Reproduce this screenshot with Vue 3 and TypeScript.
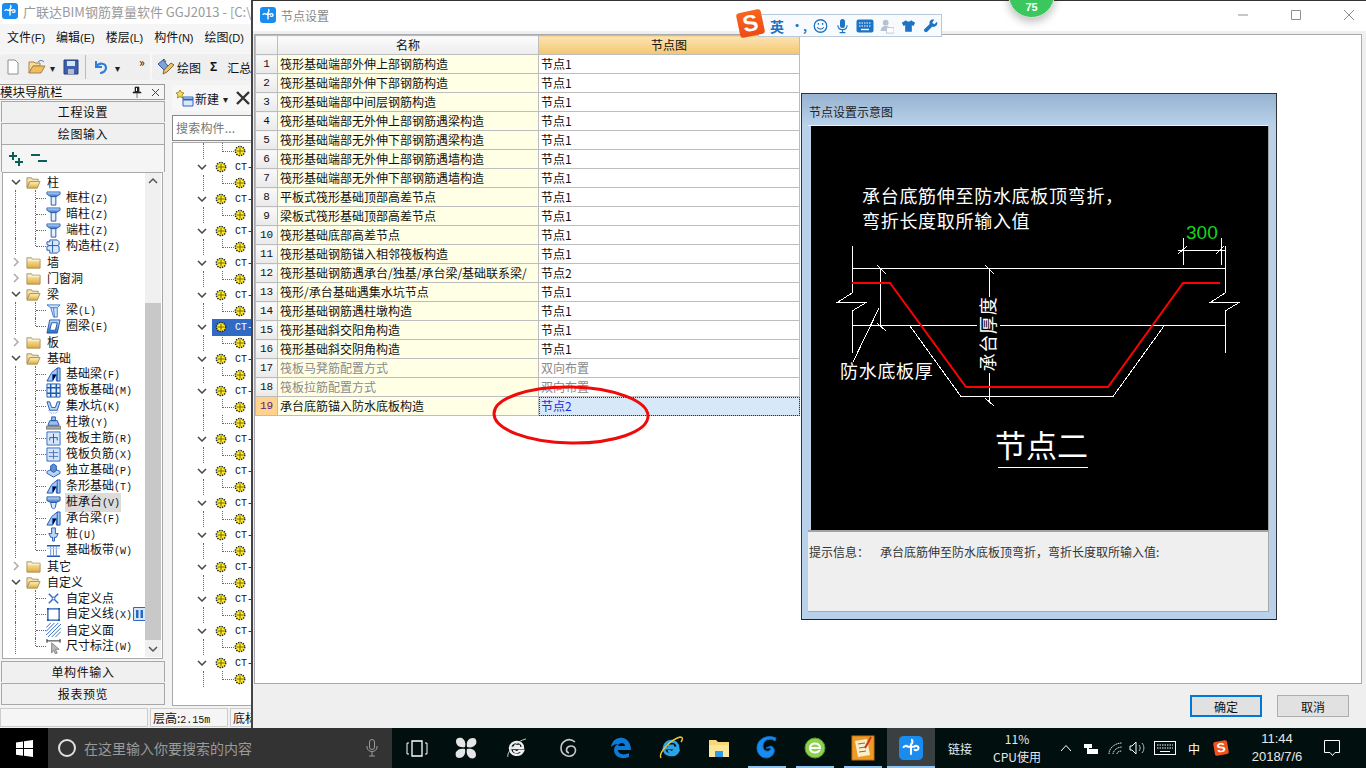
<script setup lang="ts">
interface NavRow {
  label: string
  hot?: string
  icon: string
  child?: boolean
  open?: boolean
  last?: boolean
  active?: boolean
  extra?: boolean
}

const navRows: NavRow[] = [
  { label: '柱', icon: 'open', open: true },
  { label: '框柱', hot: '(Z)', icon: 'col', child: true },
  { label: '暗柱', hot: '(Z)', icon: 'col', child: true },
  { label: '端柱', hot: '(Z)', icon: 'col', child: true },
  { label: '构造柱', hot: '(Z)', icon: 'gzz', child: true, last: true },
  { label: '墙', icon: 'closed' },
  { label: '门窗洞', icon: 'closed' },
  { label: '梁', icon: 'open', open: true },
  { label: '梁', hot: '(L)', icon: 'beam', child: true },
  { label: '圈梁', hot: '(E)', icon: 'ring', child: true, last: true },
  { label: '板', icon: 'closed' },
  { label: '基础', icon: 'open', open: true },
  { label: '基础梁', hot: '(F)', icon: 'jcl', child: true },
  { label: '筏板基础', hot: '(M)', icon: 'raft', child: true },
  { label: '集水坑', hot: '(K)', icon: 'pit', child: true },
  { label: '柱墩', hot: '(Y)', icon: 'pier', child: true },
  { label: '筏板主筋', hot: '(R)', icon: 'main', child: true },
  { label: '筏板负筋', hot: '(X)', icon: 'neg', child: true },
  { label: '独立基础', hot: '(P)', icon: 'iso', child: true },
  { label: '条形基础', hot: '(T)', icon: 'jcl', child: true },
  { label: '桩承台', hot: '(V)', icon: 'cap', child: true, active: true },
  { label: '承台梁', hot: '(F)', icon: 'jcl', child: true },
  { label: '桩', hot: '(U)', icon: 'pile', child: true },
  { label: '基础板带', hot: '(W)', icon: 'band', child: true, last: true },
  { label: '其它', icon: 'closed' },
  { label: '自定义', icon: 'open', open: true },
  { label: '自定义点', icon: 'pt', child: true },
  { label: '自定义线', hot: '(X)', icon: 'line', child: true, extra: true },
  { label: '自定义面', icon: 'area', child: true },
  { label: '尺寸标注', hot: '(W)', icon: 'dim', child: true, last: true },
]

// 中间构件树: 第一行是上一组的子项，后面基本是一父一子
const partRows = Array.from({ length: 34 }, (_, i) => {
  const parent = i <= 15 ? i % 2 === 1 : i >= 18 && i % 2 === 0
  return { parent, selected: i === 11 }
})

interface SettingRow {
  name: string
  value: string
  muted?: boolean
  current?: boolean
}

const settings: SettingRow[] = [
  { name: '筏形基础端部外伸上部钢筋构造', value: '节点1' },
  { name: '筏形基础端部外伸下部钢筋构造', value: '节点1' },
  { name: '筏形基础端部中间层钢筋构造', value: '节点1' },
  { name: '筏形基础端部无外伸上部钢筋遇梁构造', value: '节点1' },
  { name: '筏形基础端部无外伸下部钢筋遇梁构造', value: '节点1' },
  { name: '筏形基础端部无外伸上部钢筋遇墙构造', value: '节点1' },
  { name: '筏形基础端部无外伸下部钢筋遇墙构造', value: '节点1' },
  { name: '平板式筏形基础顶部高差节点', value: '节点1' },
  { name: '梁板式筏形基础顶部高差节点', value: '节点1' },
  { name: '筏形基础底部高差节点', value: '节点1' },
  { name: '筏形基础钢筋锚入相邻筏板构造', value: '节点1' },
  { name: '筏形基础钢筋遇承台/独基/承台梁/基础联系梁/', value: '节点2' },
  { name: '筏形/承台基础遇集水坑节点', value: '节点1' },
  { name: '筏形基础钢筋遇柱墩构造', value: '节点1' },
  { name: '筏形基础斜交阳角构造', value: '节点1' },
  { name: '筏形基础斜交阴角构造', value: '节点1' },
  { name: '筏板马凳筋配置方式', value: '双向布置', muted: true },
  { name: '筏板拉筋配置方式', value: '双向布置', muted: true },
  { name: '承台底筋锚入防水底板构造', value: '节点2', current: true },
]

const taskApps = [
  { icon: 'task', width: 49 },
  { icon: 'fan', width: 50 },
  { icon: 'ie-w', width: 52 },
  { icon: 'spiral', width: 52 },
  { icon: 'edge', width: 51 },
  { icon: 'ie', width: 49 },
  { icon: 'files', width: 48 },
  { icon: 'glodon-g', width: 48, running: true },
  { icon: 'ie-g', width: 48, running: true },
  { icon: 'note', width: 48, running: true },
  { icon: 'logo', width: 48, running: true, focused: true },
]

const menus = ['文件', '编辑', '楼层', '构件', '绘图']
const menuKeys = ['(F)', '(E)', '(L)', '(N)', '(D)']
</script>

<template>
  <div class="screen">
    <svg class="defs" width="0" height="0" aria-hidden="true">
      <defs>
        <linearGradient id="g-folder" x1="0" y1="0" x2="0" y2="1">
          <stop offset="0" stop-color="#fff3c4" />
          <stop offset="1" stop-color="#e0a83a" />
        </linearGradient>
        <linearGradient id="g-blue" x1="0" y1="0" x2="0" y2="1">
          <stop offset="0" stop-color="#cfe2fa" />
          <stop offset="1" stop-color="#2c68c0" />
        </linearGradient>
        <symbol id="i-open" viewBox="0 0 16 16">
          <path d="M1 3h5l1 1.5h6V7H4L1 13z" fill="#f6e3ae" stroke="#a8925c" />
          <path d="M4 7h11l-3 7H1z" fill="url(#g-folder)" stroke="#a8925c" />
        </symbol>
        <symbol id="i-closed" viewBox="0 0 16 16">
          <path d="M1 3h5l1 1.5h8V14H1z" fill="url(#g-folder)" stroke="#a8925c" />
          <path d="M1.500 5.500h13" stroke="#fff8dc" />
        </symbol>
        <symbol id="i-col" viewBox="0 0 16 16">
          <path d="M1 1h14v2.500L11 6H5L1 3.500z" fill="url(#g-blue)" stroke="#2c68c0" />
          <path d="M5.500 6h5v9h-5z" fill="#e4effc" stroke="#1f58b0" />
        </symbol>
        <symbol id="i-gzz" viewBox="0 0 16 16">
          <path d="M4 1h8l2 2v3l-2 1 2 1v5l-2 2H4v-3H1V8l3-1-3-1V3h3z" fill="#dbe8fa" stroke="#1f58b0" />
          <path d="M7 2v12M4 7h8" stroke="#1f58b0" />
        </symbol>
        <symbol id="i-beam" viewBox="0 0 16 16">
          <path d="M1 2h14l-3 3v10H8L5 5z" fill="#d3e5fa" stroke="#3c7bd0" />
          <path d="M8 5l1 10M5 5h7" stroke="#3c7bd0" />
        </symbol>
        <symbol id="i-ring" viewBox="0 0 16 16">
          <path d="M4 1h11l-3 14H1z" fill="url(#g-blue)" stroke="#1f58b0" />
          <path d="M6 4h6l-2 8H4z" fill="#fff" stroke="#1f58b0" />
        </symbol>
        <symbol id="i-jcl" viewBox="0 0 16 16">
          <path d="M1 15l5-9 6-5h3v14h-4V8L7 15z" fill="#a9c8ef" stroke="#1f58b0" />
          <path d="M7 15V8h4M12 1v14" stroke="#1f58b0" />
        </symbol>
        <symbol id="i-raft" viewBox="0 0 16 16">
          <path d="M1 1h14v14H1z" fill="#e4effc" stroke="#1f58b0" />
          <path d="M1 5h14M1 11h14M5 1v14M11 1v14" stroke="#1f58b0" stroke-width="1.600" />
        </symbol>
        <symbol id="i-pit" viewBox="0 0 16 16">
          <path d="M1 3h3l2 6h4l2-6h3l-3 9H4z" fill="#bcd6f5" stroke="#1f58b0" />
          <path d="M3 12l2 3h6l2-3" fill="none" stroke="#6fa0dd" stroke-dasharray="1 1" />
        </symbol>
        <symbol id="i-pier" viewBox="0 0 16 16">
          <path d="M6 2h4v4H6zM4 6h8l2 5H2z" fill="#9cc0ee" stroke="#1f58b0" />
          <path d="M0 12h16v3H0z" fill="#aaa" stroke="#777" />
        </symbol>
        <symbol id="i-main" viewBox="0 0 16 16">
          <path d="M1 1h14v14H1z" fill="#d6e6fa" stroke="#2c68c0" />
          <path d="M8 3v10M4 7h8M4 7v3M12 7v3" stroke="#1f58b0" />
        </symbol>
        <symbol id="i-neg" viewBox="0 0 16 16">
          <path d="M1 1h14v14H1z" fill="#d6e6fa" stroke="#2c68c0" />
          <path d="M3 6h10M3 10h10M8 3v10" stroke="#4a72b8" />
        </symbol>
        <symbol id="i-iso" viewBox="0 0 16 16">
          <path d="M1 9l7-3 7 3-7 4z" fill="#d3e5fa" stroke="#1f58b0" />
          <path d="M1 9v2l7 4 7-4V9" fill="#bcd6f5" stroke="#1f58b0" />
          <path d="M5 3l3-2 3 2v5l-3 2-3-2z" fill="#5f8fd6" stroke="#1f58b0" />
        </symbol>
        <symbol id="i-cap" viewBox="0 0 16 16">
          <path d="M1 2h14v4l-4 2H5L1 6z" fill="url(#g-blue)" stroke="#1f58b0" />
          <path d="M5 8h6l-1 5-2 2-2-2z" fill="#dbe8fa" stroke="#1f58b0" />
        </symbol>
        <symbol id="i-pile" viewBox="0 0 16 16">
          <path d="M6 1h4v6h3l-2 4H9v4H7v-4H5L3 7h3z" fill="#bcd6f5" stroke="#1f58b0" />
        </symbol>
        <symbol id="i-band" viewBox="0 0 16 16">
          <path d="M1 3h14M1 14h14" stroke="#1f58b0" stroke-width="1.600" />
          <path d="M5 3v11M11 3v11M8 3v11" stroke="#5f8fd6" />
          <path d="M1 6h14" stroke="#bcd6f5" />
        </symbol>
        <symbol id="i-pt" viewBox="0 0 16 16">
          <path d="M3 3l10 10M13 3L3 13" stroke="#2c68c0" stroke-width="1.500" />
          <circle cx="8" cy="8" r="1.400" fill="#fff" stroke="#2c68c0" />
        </symbol>
        <symbol id="i-line" viewBox="0 0 16 16">
          <path d="M2 2h12v12H2z" fill="#fff" stroke="#1f58b0" stroke-width="1.400" />
          <path d="M1 1h2v2H1zM13 1h2v2h-2zM1 13h2v2H1zM13 13h2v2h-2z" fill="#1f58b0" />
        </symbol>
        <symbol id="i-area" viewBox="0 0 16 16">
          <path d="M0 5l5-5M0 9l9-9M0 13L13 0M2 15L16 1M6 15l10-10M10 15l6-6" stroke="#2c68c0" />
        </symbol>
        <symbol id="i-dim" viewBox="0 0 16 16">
          <path d="M1 0v4M15 0v4M1 2h14" stroke="#222" />
          <path d="M6 4l8 7-4 0 2 4-2 1-2-4-2 3z" fill="#b9b9b9" stroke="#888" />
        </symbol>
        <symbol id="i-gear" viewBox="0 0 12 12">
          <circle cx="6" cy="6" r="4.600" fill="#ffee22" stroke="#222" stroke-width="1.600" stroke-dasharray="1.400 1" />
          <path d="M6 3v6M3 6h6" stroke="#776600" />
        </symbol>
        <symbol id="i-logo" viewBox="0 0 16 16">
          <rect width="16" height="16" rx="3" fill="#1a8cf0" />
          <path d="M8 2.500c1.300 0 1.300 2 0 3v7M3 8c0-1.600 2-1.800 3-.8h4c1-1 3-.8 3 .8s-2 1.800-3 .8" fill="none" stroke="#fff" stroke-width="1.400" />
        </symbol>
      </defs>
    </svg>

    <div class="desktop">
      <!-- 主程序窗口 -->
      <div class="app-window">
        <div class="app-title">
          <svg class="logo-16"><use href="#i-logo" /></svg>
          <span>广联达BIM钢筋算量软件 GGJ2013 - [C:\U</span>
        </div>
        <div class="menu-bar">
          <span v-for="(m, i) in menus" :key="m" class="menu-item">{{ m }}<i class="menu-key">{{ menuKeys[i] }}</i></span>
        </div>
        <div class="tool-bar">
          <div class="tool-group tool-group--file">
            <svg class="tool-ic" viewBox="0 0 16 16"><path d="M3 1h7l3 3v11H3z" fill="#fff" stroke="#8a8f98" /></svg>
            <svg class="tool-ic tool-ic--open" viewBox="0 0 18 16"><path d="M1 3h5l1 1h5v3H5l-4 7z" fill="#f6dc9a" stroke="#a8824a" /><path d="M5 7h12l-4 7H1z" fill="#eebd5e" stroke="#a8824a" /><path d="M10 3c2-2 4-2 6 0" fill="none" stroke="#3b6fc0" /></svg>
            <span class="drop">▾</span>
            <svg class="tool-ic tool-ic--save" viewBox="0 0 16 16"><path d="M1 1h14v14H1z" fill="#3e5fae" stroke="#25407e" /><path d="M4 2h8v5H4z" fill="#d9e4f7" /><path d="M5 10h6v5H5z" fill="#b8bcc6" /></svg>
            <span class="tool-sep"></span>
            <svg class="tool-ic" viewBox="0 0 16 16"><path d="M3 2v6h6" fill="none" stroke="#2e7fd8" stroke-width="2" /><path d="M3 8c3-5 10-4 10 1 0 3-3 5-6 5" fill="none" stroke="#2e7fd8" stroke-width="2.200" /></svg>
            <span class="drop drop--undo">▾</span>
            <span class="more">»</span>
          </div>
          <div class="tool-group tool-group--draw">
            <svg class="tool-ic tool-ic--draw" viewBox="0 0 18 16"><path d="M1 5l5-4 5 6-4 4z" fill="#7da3d8" stroke="#2f5796" /><path d="M6 1l1-1 2 3" fill="none" stroke="#2f5796" /><path d="M17 6l-7 7-4 2 1-4 7-7z" fill="#e9c46a" stroke="#7c6a3a" /></svg>
            <span class="tool-label">绘图</span>
            <span class="sigma">Σ</span>
            <span class="tool-label">汇总</span>
          </div>
        </div>
        <div class="app-body">
          <aside class="nav">
            <div class="nav-head">
              <span>模块导航栏</span>
              <span class="nav-head-tools">
                <svg width="10" height="12" viewBox="0 0 10 12"><path d="M3 1h4v5h2v1H1V6h2zM5 7v5" fill="#222" stroke="#222" stroke-width=".6" /><path d="M4.500 2v3" stroke="#fff" /></svg>
                <svg width="9" height="9" viewBox="0 0 9 9"><path d="M1 1l7 7M8 1L1 8" stroke="#444" /></svg>
              </span>
            </div>
            <div class="nav-btn">工程设置</div>
            <div class="nav-btn">绘图输入</div>
            <div class="nav-tools">
              <svg width="20" height="16" viewBox="0 0 20 16"><path d="M1 5h8M5 1v8M7 11h8M11 7v8" stroke="#0b5f5a" stroke-width="2" /></svg>
              <svg width="20" height="16" viewBox="0 0 20 16"><path d="M0 4h9M7 10h9" stroke="#0b5f5a" stroke-width="2" /></svg>
            </div>
            <div class="nav-tree">
              <div class="nav-rows">
                <div
                  v-for="row in navRows"
                  :key="row.label + row.icon"
                  class="nav-row"
                  :class="{ 'nav-row--child': row.child, 'nav-row--last': row.last }"
                >
                  <template v-if="!row.child">
                    <svg class="chev" :class="{ 'chev--closed': !row.open }" viewBox="0 0 10 10">
                      <path v-if="row.open" d="M1 3l4 4 4-4" />
                      <path v-else d="M3 1l4 4-4 4" />
                    </svg>
                    <svg class="nav-ic nav-ic--folder"><use :href="'#i-' + row.icon" /></svg>
                  </template>
                  <template v-else>
                    <i class="nav-tick"></i>
                    <svg class="nav-ic"><use :href="'#i-' + row.icon" /></svg>
                  </template>
                  <span class="nav-label" :class="{ 'nav-label--active': row.active }">{{ row.label }}<i v-if="row.hot" class="hot">{{ row.hot }}</i></span>
                  <svg v-if="row.extra" class="nav-extra" viewBox="0 0 13 14"><path d="M.5.5h12v13H.5z" fill="#d7e7fa" stroke="#2c68c0" /><path d="M3 3h2.500v8H3zM7.500 3H10v8H7.500z" fill="#2c68c0" /></svg>
                </div>
              </div>
              <div class="scroll">
                <svg class="scroll-arrow" viewBox="0 0 16 17"><path d="M4 10l4-4 4 4" /></svg>
                <div class="scroll-track"><div class="scroll-thumb"></div></div>
                <svg class="scroll-arrow" viewBox="0 0 16 17"><path d="M4 7l4 4 4-4" /></svg>
              </div>
            </div>
            <div class="nav-btn nav-btn--low">单构件输入</div>
            <div class="nav-btn nav-btn--end">报表预览</div>
          </aside>
          <section class="parts">
            <div class="parts-tools">
              <svg width="20" height="18" viewBox="0 0 20 18"><path d="M5 1l1.500 2.500L9 4 7 6l.5 3L5 7.500 2.500 9 3 6 1 4l2.500-.5z" fill="#f2dc6a" stroke="#a78f24" /><path d="M8 8h10v9H8z" fill="#dbe8fa" stroke="#2c68c0" /><path d="M8 10.500h10" stroke="#2c68c0" stroke-width="2" /></svg>
              <span class="parts-new">新建</span>
              <span class="drop">▾</span>
              <svg class="parts-del" width="16" height="16" viewBox="0 0 16 16"><path d="M2 2l12 12M14 2L2 14" stroke="#333" stroke-width="2.400" /></svg>
            </div>
            <div class="parts-search">搜索构件...</div>
            <div class="parts-tree">
              <div
                v-for="(row, i) in partRows"
                :key="i"
                class="part-row"
                :class="{ 'part-row--parent': row.parent, 'part-row--sel': row.selected }"
              >
                <template v-if="row.parent">
                  <svg class="chev chev--part" viewBox="0 0 10 10"><path d="M1 3l4 4 4-4" /></svg>
                  <span class="part-head">
                    <svg class="part-ic"><use href="#i-gear" /></svg>
                    <span class="part-code">CT-1</span>
                  </span>
                </template>
                <svg v-else class="part-ic part-ic--child"><use href="#i-gear" /></svg>
              </div>
            </div>
          </section>
        </div>
        <div class="status">
          <span class="status-cell status-cell--wide"></span>
          <span class="status-cell status-cell--mid">层高:<i class="hot">2.15m</i></span>
          <span class="status-cell">底标</span>
        </div>
      </div>

      <!-- 节点设置对话框 -->
      <div class="dialog">
        <header class="dialog-title">
          <svg class="logo-16"><use href="#i-logo" /></svg>
          <span class="dialog-name">节点设置</span>
          <span class="win-controls">
            <svg viewBox="0 0 12 12"><path d="M1 6h10" /></svg>
            <svg viewBox="0 0 12 12"><path d="M1.500 1.500h9v9h-9z" /></svg>
            <svg viewBox="0 0 12 12"><path d="M1 1l10 10M11 1L1 11" /></svg>
          </span>
        </header>
        <div class="dialog-body">
          <div class="dialog-panel">
            <table class="grid">
              <colgroup>
                <col class="col-no" />
                <col class="col-text" />
                <col class="col-text" />
              </colgroup>
              <thead>
                <tr>
                  <th class="corner"></th>
                  <th>名称</th>
                  <th class="th-active">节点图</th>
                </tr>
              </thead>
              <tbody>
                <tr v-for="(row, i) in settings" :key="i" :class="{ muted: row.muted, current: row.current }">
                  <td class="no">{{ i + 1 }}</td>
                  <td class="name"><div class="clip">{{ row.name }}</div></td>
                  <td class="value"><div class="clip">{{ row.value }}</div></td>
                </tr>
              </tbody>
            </table>
          </div>
          <footer class="dialog-foot">
            <button type="button" class="btn btn--default">确定</button>
            <button type="button" class="btn">取消</button>
          </footer>
        </div>
      </div>

      <!-- 节点示意图窗口 -->
      <div class="preview">
        <div class="preview-title">节点设置示意图</div>
        <div class="preview-inner">
          <div class="preview-canvas">
            <svg class="drawing" viewBox="811 126 457 404" width="457" height="404">
              <g class="cad-lines" shape-rendering="crispEdges">
                <path d="M852 268.500H1225M852 325.500H977M1000 325.500H1225" />
                <path d="M852 246V293L838 302H867L852 311V353" />
                <path d="M1225 246V293L1211 302H1240L1225 311V353" />
                <path d="M910 326L961 396.500H1113L1164 326" />
                <path d="M880.500 268V325M877 265L886 274M877 323L886 331M879 308L853 362" />
                <path d="M989.500 268V297M989.500 373V402M985 265L994 274M985 398L994 406" />
                <path d="M1183.500 238V265M1221.500 238V265M1178 250.500H1225M1178 254L1187 246M1216 254L1224 246" />
                <path d="M998 467H1088" stroke-width="2" />
              </g>
              <path class="cad-red" d="M852 283H890L966 387H1108L1183 283H1220" />
              <text class="cad-text" x="862" y="203">承台底筋伸至防水底板顶弯折，</text>
              <text class="cad-text" x="862" y="228">弯折长度取所输入值</text>
              <text class="cad-text" x="840" y="378">防水底板厚</text>
              <text class="cad-text cad-text--mid" x="989" y="340" transform="rotate(-90 989 334)">承台厚度</text>
              <text class="cad-dim" x="1186" y="239">300</text>
              <text class="cad-big" x="995" y="457">节点二</text>
            </svg>
          </div>
          <div class="preview-info">
            <span class="info-label">提示信息：</span>
            <span>承台底筋伸至防水底板顶弯折，弯折长度取所输入值:</span>
          </div>
        </div>
      </div>

      <!-- 红圈标注 -->
      <svg class="mark" viewBox="0 0 170 70" width="170" height="70">
        <ellipse cx="85" cy="35" rx="77" ry="28" transform="rotate(1 85 35)" />
      </svg>

      <!-- 搜狗输入法状态条 -->
      <div class="ime">
        <span class="ime-s">S</span>
        <span class="ime-lang">英</span>
        <span class="ime-punc">•,</span>
        <svg class="ime-ic" viewBox="0 0 18 18"><circle cx="9" cy="9" r="7.500" fill="none" stroke="#1f73c4" stroke-width="1.600" /><path d="M5 10.500c2 3 6 3 8 0" fill="none" stroke="#1f73c4" stroke-width="1.500" /><path d="M6.500 5.500v2M11.500 5.500v2" stroke="#1f73c4" stroke-width="1.600" /></svg>
        <svg class="ime-ic" viewBox="0 0 18 18"><rect x="6" y="0.500" width="6" height="11" rx="3" fill="#1f73c4" /><path d="M3.500 8c0 7 11 7 11 0M9 13.500V17M5.500 17h7" fill="none" stroke="#1f73c4" stroke-width="1.400" /></svg>
        <svg class="ime-ic ime-ic--wide" viewBox="0 0 18 14"><rect x="0.500" y="0.500" width="17" height="13" rx="2" fill="#1f73c4" /><path d="M3 4h12M3 7h12" stroke="#fff" stroke-dasharray="1.500 1" /><path d="M5 10.500h8" stroke="#fff" stroke-width="1.400" /></svg>
        <svg class="ime-ic" viewBox="0 0 18 18"><circle cx="8" cy="5" r="3.500" fill="#b6c2ce" /><path d="M2 15c0-8 12-8 12 0z" fill="#b6c2ce" /><rect x="9" y="11" width="9" height="6.500" fill="#fff" stroke="#b6c2ce" /></svg>
        <svg class="ime-ic" viewBox="0 0 18 18"><path d="M6 2L1 5l2 4 2-1v8h8V8l2 1 2-4-5-3c-1 2-5 2-6 0z" fill="#1f73c4" /></svg>
        <svg class="ime-ic" viewBox="0 0 18 18"><path d="M17 4l-3.500 3L11 5l2.500-3.500C10 0 7 3 8 6.500L1.500 13c-1.500 2 1.500 4.500 3.500 3L11 10c3.500 1 7-2 6-6z" fill="#1f73c4" /></svg>
      </div>

      <!-- 绿色悬浮球 -->
      <div class="ball"><span>75</span></div>
    </div>

    <!-- 任务栏 -->
    <div class="taskbar">
      <div class="start">
        <svg width="17" height="17" viewBox="0 0 17 17"><path d="M0 2.400l7-1v6.700H0zM8 1.300l9-1.300v8.100H8zM0 9h7v6.700l-7-1zM8 9h9v8l-9-1.300z" fill="#fff" /></svg>
      </div>
      <div class="search">
        <span class="cortana"></span>
        <span class="search-text">在这里输入你要搜索的内容</span>
        <svg class="search-mic" width="12" height="18" viewBox="0 0 12 18"><rect x="3.500" y="0.500" width="5" height="10" rx="2.500" fill="none" stroke="#9a9a9a" /><path d="M1 7v1c0 6 10 6 10 0V7M6 13v4M3 17h6" fill="none" stroke="#9a9a9a" /></svg>
      </div>
      <div
        v-for="app in taskApps"
        :key="app.icon"
        class="task-app"
        :class="{ 'task-app--run': app.running, 'task-app--focus': app.focused }"
        :style="{ width: app.width + 'px' }"
      >
        <svg v-if="app.icon === 'task'" width="22" height="17" viewBox="0 0 22 17"><path d="M6 1h10v15H6z" fill="none" stroke="#fff" stroke-width="1.300" /><path d="M3 3H1v11h2M19 3h2v11h-2" fill="none" stroke="#fff" /></svg>
        <svg v-else-if="app.icon === 'fan'" width="22" height="22" viewBox="0 0 22 22"><path d="M10 10C4 11 1 8 1 4c0-3 3-4 6-3 3 2 4 5 3 9zM12 10c-1-6 2-9 6-9 3 0 4 3 3 6-2 3-5 4-9 3zM12 12c6-1 9 2 9 6 0 3-3 4-6 3-3-2-4-5-3-9zM10 12c1 6-2 9-6 9-3 0-4-3-3-6 2-3 5-4 9-3z" fill="#e6e6e6" /></svg>
        <svg v-else-if="app.icon === 'ie-w'" width="24" height="24" viewBox="0 0 24 24"><path d="M5 12h13c0-8-12-8-13 0 0 8 10 9 13 3h-4c-2 2-5 1-5-1M9 10h6" fill="none" stroke="#eee" stroke-width="2.400" /><path d="M3 21c-2-4 8-16 18-18" fill="none" stroke="#ccc" /></svg>
        <svg v-else-if="app.icon === 'spiral'" width="20" height="20" viewBox="0 0 20 20"><path d="M16 4C10-1 2 3 2 10s8 10 12 7 3-9-2-9-6 6-2 7" fill="none" stroke="#c8c8c8" stroke-width="1.600" /></svg>
        <svg v-else-if="app.icon === 'edge'" width="22" height="22" viewBox="0 0 22 22"><path d="M1 10C2 3 8 0 13 1c5 1 8 6 8 12H8c0 4 6 6 11 3v4c-7 3-15 0-15-7 0-3 2-5 4-6-3 0-5 1-7 3zM8 9h7c0-4-6-4-7 0z" fill="#0f79d8" /></svg>
        <svg v-else-if="app.icon === 'ie'" width="26" height="26" viewBox="0 0 26 26"><path d="M6 13h14c0-9-13-9-14 0 0 8 11 9 14 3h-4c-2 2-5 1-5-1M10 11h6" fill="none" stroke="#29a3ea" stroke-width="2.800" /><path d="M3 23C0 18 12 5 22 2c3 0 3 2 1 5" fill="none" stroke="#f2c62f" stroke-width="1.400" /></svg>
        <svg v-else-if="app.icon === 'files'" width="22" height="20" viewBox="0 0 22 20"><path d="M1 2h7l2 2h11v15H1z" fill="#f6d675" /><path d="M1 7h20v12H1z" fill="#fbe69b" /><path d="M7 13h8v6H7z" fill="#2f9be3" /></svg>
        <svg v-else-if="app.icon === 'glodon-g'" width="24" height="26" viewBox="0 0 24 26"><path d="M21 3C12-1 2 4 2 13c0 8 8 12 13 9 5-2 6-9 1-11l-5 2h5c-1 5-8 4-8-2 0-6 7-9 12-5z" fill="#1a8cf0" stroke="#0b6fc8" /></svg>
        <svg v-else-if="app.icon === 'ie-g'" width="24" height="26" viewBox="0 0 24 26"><circle cx="12" cy="13" r="10" fill="#8fd14f" stroke="#4d9b2a" /><path d="M7 13h10c0-6-10-6-10 0 0 5 7 6 10 2" fill="none" stroke="#fff" stroke-width="2" /></svg>
        <svg v-else-if="app.icon === 'note'" width="24" height="26" viewBox="0 0 24 26"><rect x="1" y="1" width="22" height="24" fill="#ef9a24" stroke="#c87410" /><path d="M4 6l12-2 3 16-12 2z" fill="#fbeecb" /><path d="M7 9l7-1M8 13l7-1M8 17l7-1" stroke="#8b6a33" /><path d="M20 2L14 13" stroke="#c0392b" stroke-width="2" /></svg>
        <svg v-else width="24" height="24"><use href="#i-logo" /></svg>
      </div>
      <div class="tray">
        <span class="tray-link">链接</span>
        <span class="tray-cpu"><b>11%</b><b>CPU使用</b></span>
        <svg class="tray-caret" width="12" height="8" viewBox="0 0 12 8"><path d="M1 7l5-5.500L11 7" fill="none" stroke="#fff" /></svg>
        <svg class="tray-cell tray-cell--bat" width="16" height="14" viewBox="0 0 16 14"><path d="M3 0v3M7 0v3M1 3h8v4H6v2H4V7H1z" fill="#fff" /><path d="M4 8h11v5H4z" fill="#fff" /></svg>
        <svg class="tray-cell tray-cell--net" width="16" height="14" viewBox="0 0 16 14"><path d="M2 13C2 7 8 2 15 2M6 13c0-3 4-7 9-7M10 13c0-2 2-3 5-3" fill="none" stroke="#ddd" stroke-dasharray="1.500 .6" /></svg>
        <svg class="tray-cell tray-cell--vol" width="16" height="14" viewBox="0 0 16 14"><path d="M1 5h2l4-4v12L3 9H1z" fill="none" stroke="#fff" /><path d="M10 4c1.500 2 1.500 4 0 6M13 2c2.500 3 2.500 7 0 10" fill="none" stroke="#bbb" /></svg>
        <svg class="tray-cell tray-cell--key" width="22" height="14" viewBox="0 0 22 14"><rect x="0.500" y="0.500" width="21" height="13" fill="none" stroke="#fff" /><path d="M3 4h16M3 7h16" stroke="#fff" stroke-dasharray="1.500 1" /><path d="M6 10.500h10" stroke="#fff" /></svg>
        <span class="tray-ime">中</span>
        <span class="tray-s">S</span>
        <span class="clock"><b>11:44</b><b>2018/7/6</b></span>
        <svg class="notice" width="16" height="16" viewBox="0 0 16 16"><path d="M.500.500h15v12H11L8.500 15.500 6 12.500H.500z" fill="none" stroke="#fff" /></svg>
      </div>
    </div>
  </div>
</template>

<style>
html,
body {
  margin: 0;
  background: #000;
}
</style>

<style scoped>
.screen {
  position: relative;
  width: 1366px;
  height: 768px;
  overflow: hidden;
  display: flex;
  flex-direction: column;
  font-family: "Noto Sans CJK SC", "Liberation Sans", sans-serif;
  font-size: 12px;
  color: #111;
  background: #f0f0f0;
}

.defs {
  position: absolute;
}

i {
  font-style: normal;
}

.desktop {
  position: relative;
  height: 728px;
  flex: none;
}

.hot {
  font-family: "Liberation Mono", monospace;
  font-size: 10px;
}

.app-window {
  height: 100%;
  display: flex;
  flex-direction: column;
  background: #f3f3f3;
}

.app-title {
  height: 24px;
  flex: none;
  display: flex;
  align-items: center;
  gap: 5px;
  padding: 0 0 2px 2px;
  box-sizing: border-box;
  background: #fff;
  color: #9a9a9a;
  font-size: 13px;
  white-space: nowrap;
  overflow: hidden;
}

.logo-16 {
  width: 16px;
  height: 16px;
  flex: none;
}

.menu-bar {
  height: 28px;
  flex: none;
  display: flex;
  align-items: center;
  gap: 11px;
  padding: 0 0 3px 7px;
  background: #f5f5f5;
  box-sizing: border-box;
}

.menu-key {
  font-family: "Liberation Sans", sans-serif;
  font-size: 11px;
}

.tool-bar {
  height: 28px;
  flex: none;
  display: flex;
  gap: 2px;
  padding-top: 2px;
  box-sizing: border-box;
  background: #f7f7f7;
}

.tool-group {
  display: flex;
  align-items: center;
  background: #efefef;
  border-radius: 3px;
  height: 26px;
}

.tool-group--file {
  width: 150px;
  padding-left: 5px;
  box-sizing: border-box;
}

.tool-group--draw {
  flex: 1;
  padding-left: 5px;
}

.tool-ic {
  width: 16px;
  height: 16px;
  flex: none;
}

.tool-ic--open {
  width: 18px;
  margin-left: 7px;
}

.tool-ic--save {
  margin-left: 5px;
}

.tool-ic--draw {
  width: 18px;
}

.drop {
  font-size: 10px;
  color: #222;
  width: 12px;
  text-align: center;
  flex: none;
}

.drop--undo {
  margin-left: 2px;
}

.tool-sep {
  width: 1px;
  height: 24px;
  background: #bbb;
  margin: 0 7px 0 6px;
  flex: none;
}

.more {
  font-size: 12px;
  margin: -10px 0 0 16px;
  line-height: 12px;
}

.tool-label {
  margin-left: 2px;
}

.sigma {
  font-family: "Liberation Sans", sans-serif;
  font-weight: 700;
  margin-left: 9px;
  margin-right: 8px;
}

.app-body {
  flex: 1;
  min-height: 0;
  display: flex;
}

.nav {
  width: 165px;
  flex: none;
  padding: 4px 0 3px;
  box-sizing: border-box;
  display: flex;
  flex-direction: column;
}

.nav-head {
  height: 14px;
  line-height: 14px;
  display: flex;
  justify-content: space-between;
  border: 1px solid #9a9a9a;
  border-left: 0;
  background: #f5f5f5;
  font-size: 12.500px;
}

.nav-head-tools {
  display: flex;
  align-items: center;
  gap: 9px;
  padding-right: 4px;
}

.nav-btn {
  height: 20px;
  line-height: 20px;
  margin: 1px 0 0 1px;
  text-align: center;
  border: 1px solid #a8a8a8;
  border-bottom-width: 0;
  background: #f0f0f0;
  font-size: 12px;
  letter-spacing: 0.6px;
}

.nav-btn--low {
  margin-top: 2px;
}

.nav-btn--end {
  border-bottom-width: 1px;
}

.nav-tools {
  height: 28px;
  flex: none;
  display: flex;
  align-items: center;
  gap: 3px;
  padding-left: 6px;
  border: 1px solid #a8a8a8;
  border-bottom: 0;
  margin-left: 1px;
  background: #f5f5f5;
  box-sizing: border-box;
}

.nav-tree {
  flex: 1;
  min-height: 0;
  display: flex;
  margin-left: 2px;
  margin-right: 2px;
  border: 1px solid #a8a8a8;
  background: #fff;
  overflow: hidden;
}

.nav-rows {
  flex: 1;
  min-width: 0;
  overflow: hidden;
  padding-top: 1px;
}

.nav-row {
  position: relative;
  height: 16px;
  display: flex;
  align-items: center;
  white-space: nowrap;
}

.nav-row--child::before {
  content: "";
  position: absolute;
  left: 32px;
  top: 0;
  bottom: 0;
  border-left: 1px dotted #666;
}

.nav-row--child.nav-row--last::before {
  bottom: 8px;
}

.nav-row--child::after {
  content: "";
  position: absolute;
  left: 12px;
  top: 0;
  bottom: 0;
  border-left: 1px dotted #666;
}

.nav-tick {
  position: absolute;
  left: 33px;
  top: 8px;
  width: 10px;
  border-top: 1px dotted #666;
}

.chev {
  width: 10px;
  height: 10px;
  margin-left: 8px;
  flex: none;
}

.chev path {
  fill: none;
  stroke: #444;
  stroke-width: 1.500;
}

.chev--closed path {
  stroke: #aaa;
}

.nav-ic {
  width: 15px;
  height: 15px;
  flex: none;
  margin-left: 43px;
  position: relative;
  z-index: 1;
}

.nav-ic--folder {
  margin-left: 5px;
}

.nav-label {
  margin-left: 5px;
  padding: 0 1px;
  line-height: 16px;
}

.nav-row--child .nav-label {
  margin-left: 4px;
}

.nav-label--active {
  background: #dcdcdc;
}

.nav-extra {
  width: 13px;
  height: 14px;
  flex: none;
}

.scroll {
  width: 16px;
  flex: none;
  display: flex;
  flex-direction: column;
  background: #f0f0f0;
  margin: 0 1px 1px 0;
}

.scroll-arrow {
  width: 16px;
  height: 17px;
  flex: none;
}

.scroll-arrow path {
  fill: none;
  stroke: #555;
  stroke-width: 1.500;
}

.scroll-track {
  flex: 1;
  display: flex;
  flex-direction: column;
  justify-content: flex-end;
}

.scroll-thumb {
  height: 337px;
  background: #c8c8c8;
}

.parts {
  flex: 1;
  min-width: 0;
  padding: 5px 0 2px 7px;
  display: flex;
  flex-direction: column;
  overflow: hidden;
}

.parts-tools {
  height: 26px;
  flex: none;
  display: flex;
  align-items: center;
  padding-left: 3px;
  margin-bottom: 2px;
  background: #f7f7f7;
}

.parts-del {
  margin-left: 4px;
}

.parts-search {
  height: 26px;
  flex: none;
  line-height: 24px;
  margin-top: 2px;
  padding-left: 3px;
  background: #fff;
  border: 1px solid #888;
  box-sizing: border-box;
  color: #777;
  letter-spacing: 0.2px;
}

.parts-tree {
  flex: 1;
  min-height: 0;
  margin-top: 1px;
  background: #fff;
  border: 1px solid #a8a8a8;
  overflow: hidden;
}

.part-row {
  position: relative;
  height: 16px;
  display: flex;
  align-items: center;
  white-space: nowrap;
}

.part-row::before {
  content: "";
  position: absolute;
  left: 30px;
  top: 0;
  bottom: 0;
  border-left: 1px dotted #666;
}

.part-row--parent::before {
  display: none;
}

.part-row:not(.part-row--parent)::after {
  content: "";
  position: absolute;
  left: 49px;
  top: 0;
  width: 11px;
  height: 8px;
  border-left: 1px dotted #666;
  border-bottom: 1px dotted #666;
}

.chev--part {
  margin-left: 24px;
}

.part-head {
  display: flex;
  align-items: center;
  gap: 8px;
  margin-left: 5px;
  height: 17px;
  padding-left: 3px;
  flex: 1;
}

.part-row--sel .part-head {
  background: #316ac5;
  color: #fff;
}

.part-code {
  font-family: "Liberation Mono", monospace;
  font-size: 10px;
}

.part-ic {
  width: 12px;
  height: 12px;
  flex: none;
}

.part-ic--child {
  margin-left: 61px;
}

.status {
  height: 20px;
  flex: none;
  display: flex;
  gap: 2px;
  background: #f0f0f0;
}

.status-cell {
  line-height: 18px;
  border: 1px solid #ccc;
  background: #f5f5f5;
  padding-left: 2px;
  white-space: nowrap;
  flex: 1;
  box-sizing: border-box;
  margin-bottom: 1px;
}

.status-cell--wide {
  flex: none;
  width: 148px;
}

.status-cell--mid {
  flex: none;
  width: 78px;
}

.dialog {
  position: absolute;
  left: 251px;
  top: 0;
  right: 0;
  bottom: 0;
  display: flex;
  flex-direction: column;
  border-top: 1px solid #333;
  border-left: 2px solid #444;
  background: #fff;
}

.dialog-title {
  height: 30px;
  flex: none;
  display: flex;
  align-items: center;
  padding: 0 0 2px 7px;
  box-sizing: border-box;
}

.dialog-name {
  margin-left: 5px;
  color: #888;
}

.win-controls {
  margin-left: auto;
  display: flex;
  gap: 41px;
  padding-right: 11px;
}

.win-controls svg {
  width: 12px;
  height: 12px;
}

.win-controls path {
  fill: none;
  stroke: #8f8f8f;
  stroke-width: 1;
}

.dialog-body {
  flex: 1;
  min-height: 0;
  display: flex;
  flex-direction: column;
  background: #efefef;
  padding: 3px 4px 0 1px;
}

.dialog-panel {
  flex: 1;
  min-height: 0;
  background: #fff;
  border: 1px solid #a9a9b0;
  overflow: hidden;
}

.grid {
  border-collapse: collapse;
  table-layout: fixed;
  width: 544px;
}

.col-no {
  width: 22px;
}

.col-text {
  width: 261px;
}

.grid th,
.grid td {
  height: 18px;
  padding: 0;
  border: 1px solid #bdbdbd;
  font-weight: 400;
  line-height: 18px;
  box-sizing: content-box;
  white-space: nowrap;
  overflow: hidden;
}

.grid th {
  background: linear-gradient(#fcfcfc, #ececec);
}

.grid th.th-active {
  background: linear-gradient(#fbe4b4, #f3c670);
}

.grid .no {
  background: linear-gradient(#fafafa, #e9e9e9);
  text-align: center;
  font-family: "Liberation Mono", monospace;
  font-size: 11px;
}

.grid .name {
  background: #ffffe6;
  padding-left: 2px;
}

.grid .value {
  padding-left: 2px;
}

.clip {
  overflow: hidden;
  white-space: nowrap;
  height: 18px;
}

.muted .name,
.muted .value {
  color: #8a8a8a;
}

.grid .current .no {
  background: #ffd28d;
  color: #5a1a80;
}

.grid .current .value {
  background: #d7e8f8;
  color: #1b2be0;
  outline: 1px dotted #333;
  outline-offset: -1px;
}

.dialog-foot {
  height: 44px;
  flex: none;
  display: flex;
  justify-content: flex-end;
  align-items: center;
  gap: 15px;
  padding-right: 13px;
}

.btn {
  width: 72px;
  height: 22px;
  padding: 0;
  font: inherit;
  background: #e1e1e1;
  border: 1px solid #adadad;
  color: #111;
}

.btn--default {
  border: 2px solid #0078d7;
}

.preview {
  position: absolute;
  left: 801px;
  top: 93px;
  width: 476px;
  height: 527px;
  box-sizing: border-box;
  border: 1px solid #333;
  border-bottom-color: #222;
  background: #b9d1ea;
  display: flex;
  flex-direction: column;
}

.preview-title {
  height: 31px;
  flex: none;
  padding: 9px 0 0 7px;
  box-sizing: border-box;
  line-height: 18px;
  color: #222;
  background: linear-gradient(#97b3d1, #b9d1ea);
}

.preview-inner {
  margin: 0 7px 7px 6px;
  flex: 1;
  min-height: 0;
  display: flex;
  flex-direction: column;
}

.preview-canvas {
  height: 407px;
  flex: none;
  box-sizing: border-box;
  padding-left: 3px;
  border-top: 1px solid #eef3f9;
  border-right: 1px solid #a3a3a3;
  border-bottom: 2px solid #a3a3a3;
}

.drawing {
  display: block;
  background: #000;
}

.cad-lines path {
  fill: none;
  stroke: #fff;
  stroke-width: 1;
}

.cad-red {
  fill: none;
  stroke: #ff0000;
  stroke-width: 2;
}

.cad-text {
  fill: #fff;
  font-size: 18px;
  letter-spacing: 0.7px;
}

.cad-text--mid {
  text-anchor: middle;
}

.cad-dim {
  fill: #16d516;
  font-family: "Liberation Sans", sans-serif;
  font-size: 19px;
}

.cad-big {
  fill: #fff;
  font-size: 31px;
}

.preview-info {
  flex: 1;
  display: flex;
  padding: 12px 0 0 1px;
  background: #efefef;
  border: solid #a8a8a8;
  border-width: 0 1px 1px 0;
  color: #333;
  line-height: 16px;
}

.info-label {
  width: 71px;
  flex: none;
}

.mark {
  position: absolute;
  left: 486px;
  top: 380px;
}

.mark ellipse {
  fill: none;
  stroke: #f00b0b;
  stroke-width: 3;
}

.ime {
  position: absolute;
  left: 758px;
  top: 14px;
  width: 184px;
  height: 23px;
  box-sizing: border-box;
  display: flex;
  align-items: center;
  gap: 7px;
  padding-left: 11px;
  background: #f8fbfe;
  border: 1px solid #b9c9d9;
}

.ime-s {
  position: absolute;
  left: -21px;
  top: -4px;
  width: 25px;
  height: 25px;
  border-radius: 3px;
  transform: rotate(-12deg);
  background: linear-gradient(#f7651f, #ef4a14);
  color: #fff;
  font: 700 23px/25px "Liberation Sans", sans-serif;
  text-align: center;
}

.ime-lang {
  font-weight: 700;
  font-size: 14px;
  color: #1f73c4;
}

.ime-punc {
  width: 15px;
  font-weight: 700;
  color: #1f73c4;
  font-size: 12px;
}

.ime-ic {
  width: 15px;
  height: 16px;
  flex: none;
}

.ime-ic--wide {
  width: 18px;
  margin: 0 -2px 0 -1px;
}

.ball {
  position: absolute;
  left: 1008px;
  top: -29px;
  width: 47px;
  height: 47px;
  border-radius: 50%;
  background: #3cc75e;
  border: 1px solid #ddd;
  box-shadow: 0 4px 8px rgba(0, 0, 0, 0.25);
  display: flex;
  align-items: flex-end;
  justify-content: center;
  color: #fff;
  font: 700 11px/14px "Liberation Sans", sans-serif;
  padding-bottom: 3px;
  box-sizing: border-box;
}

.taskbar {
  flex: 1;
  min-height: 0;
  display: flex;
  background: #01100f;
  align-items: stretch;
}

.start {
  width: 48px;
  flex: none;
  background: #000;
  display: flex;
  align-items: center;
  justify-content: center;
}

.search {
  width: 344px;
  flex: none;
  background: #333;
  display: flex;
  align-items: center;
  padding-left: 10px;
  box-sizing: border-box;
}

.cortana {
  width: 18px;
  height: 18px;
  box-sizing: border-box;
  border: 2px solid #e0e0e0;
  border-radius: 50%;
  flex: none;
}

.search-text {
  margin-left: 8px;
  color: #9a9a9a;
  font-size: 14px;
}

.search-mic {
  margin-left: 114px;
}

.task-app {
  position: relative;
  flex: none;
  display: flex;
  align-items: center;
  justify-content: center;
}

.task-app--run::after {
  content: "";
  position: absolute;
  left: 5px;
  right: 5px;
  bottom: 0;
  height: 2px;
  background: #8fc3f0;
}

.task-app--focus {
  background: #3a3f42;
}

.task-app--focus::after {
  left: 0;
  right: 0;
}

.tray {
  flex: 1;
  min-width: 0;
  display: flex;
  align-items: center;
  color: #e8e8e8;
}

.tray b {
  display: block;
  font-weight: 400;
  line-height: 18px;
  white-space: nowrap;
}

.tray-link {
  width: 50px;
  text-align: center;
  flex: none;
}

.tray-cpu {
  width: 64px;
  text-align: center;
  flex: none;
}

.tray-caret {
  margin: 0 11px 0 11px;
  flex: none;
}

.tray-cell {
  flex: none;
}

.tray-cell--net {
  margin-left: 8px;
}

.tray-cell--vol {
  margin-left: 6px;
}

.tray-cell--key {
  margin-left: 9px;
}

.tray-ime {
  width: 28px;
  margin-left: 4px;
  text-align: center;
  color: #fff;
  flex: none;
}

.tray-s {
  width: 14px;
  height: 14px;
  margin-left: 6px;
  flex: none;
  border-radius: 2px;
  background: #f0521c;
  transform: rotate(-10deg);
  color: #fff;
  font: 700 13px/14px "Liberation Sans", sans-serif;
  text-align: center;
}

.clock {
  width: 86px;
  flex: none;
  text-align: center;
  font-family: "Liberation Sans", sans-serif;
  font-size: 13px;
  margin-left: 6px;
}

.notice {
  margin-left: 4px;
  flex: none;
}
</style>
